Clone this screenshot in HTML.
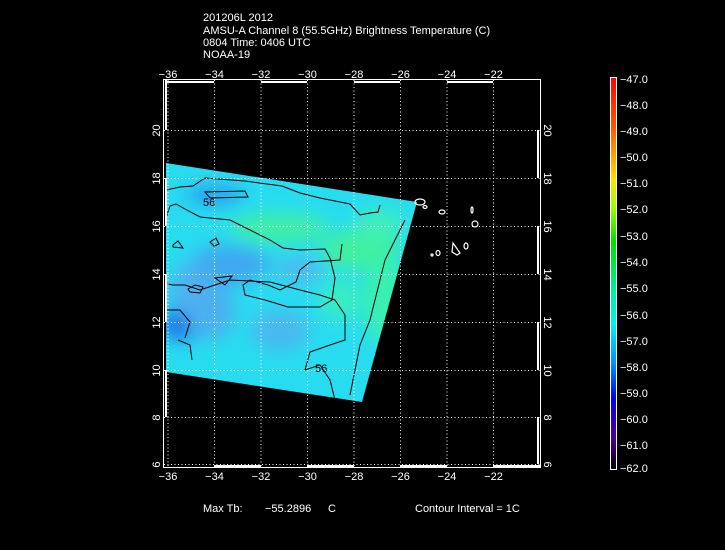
<!DOCTYPE html>
<html><head><meta charset="utf-8"><style>
html,body{margin:0;padding:0;background:#000;}
svg{display:block}
text{font-family:"Liberation Sans",sans-serif;font-size:11px;fill:#fff}
</style></head><body>
<svg width="725" height="550" viewBox="0 0 725 550" xmlns="http://www.w3.org/2000/svg">
<defs>
<linearGradient id="cb" x1="0" y1="0" x2="0" y2="1">
<stop offset="0" stop-color="#ff0000"/>
<stop offset="0.13" stop-color="#ff5a00"/>
<stop offset="0.26" stop-color="#ffe000"/>
<stop offset="0.33" stop-color="#a0ff00"/>
<stop offset="0.42" stop-color="#00e000"/>
<stop offset="0.55" stop-color="#00f0a0"/>
<stop offset="0.63" stop-color="#00f0f0"/>
<stop offset="0.73" stop-color="#0090ff"/>
<stop offset="0.82" stop-color="#0000f0"/>
<stop offset="0.92" stop-color="#500090"/>
<stop offset="1" stop-color="#000000"/>
</linearGradient>
<clipPath id="sw"><polygon points="166,163 417,202 362,402 166,372"/></clipPath>
<filter id="bl"><feGaussianBlur stdDeviation="9"/></filter>
</defs>

<g font-size="11">
<text x="203" y="21">201206L 2012</text>
<text x="203" y="34">AMSU-A Channel 8 (55.5GHz) Brightness Temperature (C)</text>
<text x="203" y="46">0804 Time: 0406 UTC</text>
<text x="203" y="58">NOAA-19</text>
</g>

<g clip-path="url(#sw)">
<rect x="160" y="160" width="260" height="250" fill="#28dcf0"/>
<g filter="url(#bl)">
<ellipse cx="280" cy="228" rx="50" ry="14" fill="#40f0a0"/>
<ellipse cx="360" cy="250" rx="40" ry="20" fill="#40f0a0"/>
<ellipse cx="385" cy="300" rx="22" ry="45" fill="#38f0b0"/>
<ellipse cx="380" cy="225" rx="25" ry="15" fill="#40f0b8"/>
<ellipse cx="340" cy="300" rx="20" ry="20" fill="#38eec0"/>
<ellipse cx="180" cy="325" rx="20" ry="15" fill="#1a70e8"/>
<ellipse cx="215" cy="195" rx="30" ry="8" fill="#2a90f0"/>
<ellipse cx="230" cy="265" rx="40" ry="20" fill="#40a8f0"/>
<ellipse cx="210" cy="310" rx="25" ry="30" fill="#48b0f0"/>
<ellipse cx="280" cy="330" rx="30" ry="20" fill="#48b8f0"/>
<ellipse cx="300" cy="270" rx="25" ry="12" fill="#50b8f0"/>
<ellipse cx="190" cy="290" rx="20" ry="25" fill="#50b0f0"/>
</g>
<g fill="none" stroke="#000" stroke-width="1">
<polyline points="166,190 180,187 193,186 205,178 245,181 282,186 300,193 320,198 350,204 360,215 370,213 378,212 380,205"/>
<polyline points="166,218 170,206 176,204 185,209 200,217 230,220 250,230 270,240 283,248 300,250 325,249 330,258 335,278 332,300 320,307 288,307 265,300 245,295 243,285 250,280 268,285 280,290 296,282 300,270 310,262 340,260 342,244"/>
<polyline points="166,283 172,285 185,285 200,290 230,280 270,282 300,290 320,295 335,300 345,315 345,340 330,345 310,352 305,370 320,365 330,380 335,400"/>
<polyline points="405,220 395,240 385,260 380,280 375,300 370,320 360,345 355,370 350,395"/>
<polygon points="205,192 245,191 248,197 210,198"/>
<polygon points="173,245 178,241 183,248 173,247"/>
<polygon points="210,242 216,238 219,244 214,246"/>
<polygon points="215,278 232,276 225,285"/>
<polygon points="188,289 195,285 203,287 200,293 190,292"/>
<polyline points="166,310 180,310 190,322 185,338"/>
<polyline points="178,340 190,345 192,360"/>
</g>
</g>
<text x="203" y="206" font-size="10" fill="#000" style="fill:#000">56</text>
<text x="315" y="372" font-size="10" style="fill:#000">56</text>

<g fill="none" stroke="#fff" stroke-width="1.2">
<ellipse cx="420" cy="202" rx="5" ry="3"/>
<ellipse cx="425" cy="207" rx="2" ry="1.5"/>
<ellipse cx="442" cy="212" rx="3" ry="2"/>
<ellipse cx="472" cy="210" rx="1" ry="3"/>
<ellipse cx="475" cy="224" rx="3" ry="3"/>
<path d="M453,243 L460,253 L457,255 L452,252 Z"/>
<ellipse cx="466" cy="246" rx="2" ry="3"/>
<ellipse cx="438" cy="253" rx="2" ry="2.5"/>
<ellipse cx="432" cy="255" rx="1" ry="1"/>
</g>

<g stroke="#fff" stroke-width="1" stroke-dasharray="1 2.5">
<line x1="168" y1="80" x2="168" y2="466"/>
<line x1="214.5" y1="80" x2="214.5" y2="466"/>
<line x1="261" y1="80" x2="261" y2="466"/>
<line x1="307.5" y1="80" x2="307.5" y2="466"/>
<line x1="354" y1="80" x2="354" y2="466"/>
<line x1="400.5" y1="80" x2="400.5" y2="466"/>
<line x1="447" y1="80" x2="447" y2="466"/>
<line x1="493.5" y1="80" x2="493.5" y2="466"/>
<line x1="164" y1="130.5" x2="540" y2="130.5"/>
<line x1="164" y1="178.5" x2="540" y2="178.5"/>
<line x1="164" y1="226.5" x2="540" y2="226.5"/>
<line x1="164" y1="274.5" x2="540" y2="274.5"/>
<line x1="164" y1="322.5" x2="540" y2="322.5"/>
<line x1="164" y1="370.5" x2="540" y2="370.5"/>
<line x1="164" y1="417.5" x2="540" y2="417.5"/>
<line x1="164" y1="464.5" x2="540" y2="464.5"/>
</g>

<rect x="163.5" y="79.5" width="377" height="388" fill="none" stroke="#fff" stroke-width="1"/>
<g stroke="#fff" stroke-width="2">
<line x1="165" y1="82" x2="214" y2="82"/><line x1="261" y1="82" x2="307" y2="82"/><line x1="354" y1="82" x2="400" y2="82"/><line x1="447" y1="82" x2="493" y2="82"/>
<line x1="214" y1="466" x2="261" y2="466"/><line x1="307" y1="466" x2="354" y2="466"/><line x1="400" y1="466" x2="447" y2="466"/><line x1="493" y1="466" x2="540" y2="466"/>
<line x1="166" y1="80" x2="166" y2="130"/><line x1="166" y1="178" x2="166" y2="226"/><line x1="166" y1="274" x2="166" y2="322"/><line x1="166" y1="370" x2="166" y2="417"/>
<line x1="538" y1="130" x2="538" y2="178"/><line x1="538" y1="226" x2="538" y2="274"/><line x1="538" y1="322" x2="538" y2="370"/><line x1="538" y1="417" x2="538" y2="464"/>
</g>

<g text-anchor="middle">
<text x="168" y="78">−36</text><text x="214.5" y="78">−34</text><text x="261" y="78">−32</text><text x="307.5" y="78">−30</text><text x="354" y="78">−28</text><text x="400.5" y="78">−26</text><text x="447" y="78">−24</text><text x="493.5" y="78">−22</text>
<text x="168" y="480">−36</text><text x="214.5" y="480">−34</text><text x="261" y="480">−32</text><text x="307.5" y="480">−30</text><text x="354" y="480">−28</text><text x="400.5" y="480">−26</text><text x="447" y="480">−24</text><text x="493.5" y="480">−22</text>
</g>
<g text-anchor="middle">
<text transform="translate(160,130.5) rotate(-90)">20</text>
<text transform="translate(160,178.5) rotate(-90)">18</text>
<text transform="translate(160,226.5) rotate(-90)">16</text>
<text transform="translate(160,274.5) rotate(-90)">14</text>
<text transform="translate(160,322.5) rotate(-90)">12</text>
<text transform="translate(160,370.5) rotate(-90)">10</text>
<text transform="translate(160,417.5) rotate(-90)">8</text>
<text transform="translate(160,464.5) rotate(-90)">6</text>
<text transform="translate(544,130.5) rotate(90)">20</text>
<text transform="translate(544,178.5) rotate(90)">18</text>
<text transform="translate(544,226.5) rotate(90)">16</text>
<text transform="translate(544,274.5) rotate(90)">14</text>
<text transform="translate(544,322.5) rotate(90)">12</text>
<text transform="translate(544,370.5) rotate(90)">10</text>
<text transform="translate(544,417.5) rotate(90)">8</text>
<text transform="translate(544,464.5) rotate(90)">6</text>
</g>

<rect x="610.5" y="77.5" width="6" height="392" fill="url(#cb)" stroke="#fff" stroke-width="1"/>
<g>
<text x="620" y="83">−47.0</text><text x="620" y="109">−48.0</text><text x="620" y="135">−49.0</text><text x="620" y="161">−50.0</text><text x="620" y="187">−51.0</text><text x="620" y="213">−52.0</text><text x="620" y="240">−53.0</text><text x="620" y="266">−54.0</text><text x="620" y="292">−55.0</text><text x="620" y="319">−56.0</text><text x="620" y="345">−57.0</text><text x="620" y="371">−58.0</text><text x="620" y="397">−59.0</text><text x="620" y="423">−60.0</text><text x="620" y="449">−61.0</text><text x="620" y="472">−62.0</text>
</g>

<text x="203" y="512">Max Tb:</text>
<text x="265" y="512">−55.2896</text>
<text x="328" y="512">C</text>
<text x="415" y="512">Contour Interval = 1C</text>
</svg>
</body></html>
